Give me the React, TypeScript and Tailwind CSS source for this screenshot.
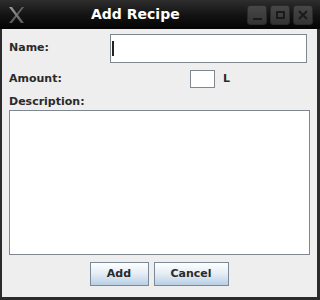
const font = { fontFamily: '"DejaVu Sans", sans-serif' };

const TitleButton = ({ children }: { children: React.ReactNode }) => (
  <div className="flex h-[20px] w-[20px] items-center justify-center rounded-[3px] border border-[#2a2a2a] bg-gradient-to-b from-[#474747] to-[#343434]">
    {children}
  </div>
);

const App = () => {
  return (
    <div className="flex h-[300px] w-[320px] flex-col bg-black" style={font}>
      {/* title bar */}
      <div className="relative flex h-[29px] items-center bg-gradient-to-b from-[#2e2e2e] via-[#141414] to-[#050505]">
        <svg className="ml-[8px] h-[18px] w-[17px]" viewBox="0 0 17 18">
          <defs>
            <linearGradient id="xg" x1="0" y1="0" x2="1" y2="1">
              <stop offset="0" stopColor="#9a9a9a" />
              <stop offset="1" stopColor="#5a5a5a" />
            </linearGradient>
          </defs>
          <path d="M1 1 L4 1 L16 17 L13 17 Z" fill="url(#xg)" />
          <path d="M14 1 L16 1 L4 17 L1 17 Z" fill="url(#xg)" opacity="0.75" />
        </svg>
        <div className="absolute left-[91px] top-[4px] text-[14px] font-bold leading-[20px] text-white">Add Recipe</div>
        <div className="ml-auto mr-[7px] flex gap-[3px]">
          <TitleButton>
            <div className="mt-[8px] h-[2px] w-[9px] bg-[#1a1a1a]" />
          </TitleButton>
          <TitleButton>
            <div className="h-[8px] w-[9px] border-2 border-[#1a1a1a]" />
          </TitleButton>
          <TitleButton>
            <svg className="h-[10px] w-[10px]" viewBox="0 0 10 10">
              <path d="M1 1 L9 9 M9 1 L1 9" stroke="#1a1a1a" strokeWidth="1.8" />
            </svg>
          </TitleButton>
        </div>
      </div>

      {/* body */}
      <div className="flex flex-1 flex-col border-b-[3px] border-l-[2px] border-r-[3px] border-[#2b2b2b] bg-[#eeeeee] pl-[7px] text-[11px] font-bold text-[#2a2a2a]">
        <div className="mt-[5px] flex h-[29px] items-center">
          <div className="w-[101px]">Name:</div>
          <div className="flex h-[29px] w-[197px] items-center border border-[#7f8790] bg-white pl-[1px]">
            <div className="h-[15px] w-[2px] bg-[#222222]" />
          </div>
        </div>
        <div className="mt-[7px] flex h-[18px] items-center">
          <div className="w-[181px]">Amount:</div>
          <div className="h-[18px] w-[25px] border border-[#7f8790] bg-white" />
          <div className="ml-[8px]">L</div>
        </div>
        <div className="mt-[7px] h-[14px] leading-[14px]">Description:</div>
        <div className="mt-[1px] h-[145px] w-[301px] border border-[#7f8790] bg-white" />
        <div className="mt-[7px] flex justify-center gap-[5px] pr-[8px]">
          <button className="h-[24px] w-[59px] border border-[#7a8a99] bg-gradient-to-b from-white via-[#e4ecf5] to-[#b8cfe5] text-[#2a2a2a]">
            Add
          </button>
          <button className="h-[24px] w-[75px] border border-[#7a8a99] bg-gradient-to-b from-white via-[#e4ecf5] to-[#b8cfe5] text-[#2a2a2a]">
            Cancel
          </button>
        </div>
      </div>
    </div>
  );
};

export default App;
